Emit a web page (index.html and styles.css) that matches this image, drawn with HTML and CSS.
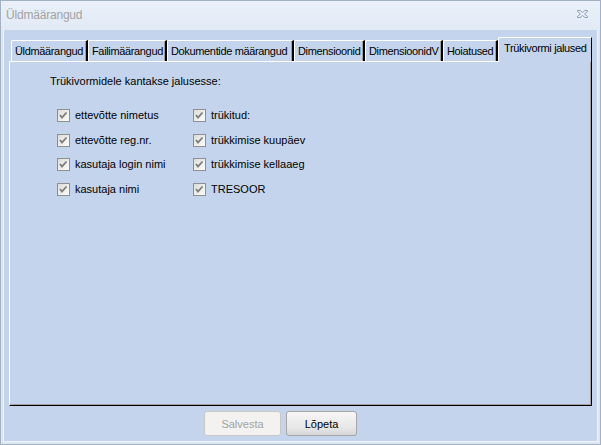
FILE: index.html
```html
<!DOCTYPE html>
<html lang="et">
<head>
<meta charset="utf-8">
<title>Üldmäärangud</title>
<link rel="stylesheet" href="styles.css">
</head>
<body>
<div class="window">
  <div class="titlebar">
    <span class="title">Üldmäärangud</span>
    <svg class="close" width="11" height="8" viewBox="0 0 11 8">
      <path d="M0.5 0.5 H3 L5.5 2.5 L8 0.5 H10.5 V1.5 L7.5 4 L10.5 6.5 V7.5 H8 L5.5 5.5 L3 7.5 H0.5 V6.5 L3.5 4 L0.5 1.5 Z" fill="#eef3fa" stroke="#8a9dbd" stroke-width="1"/>
    </svg>
  </div>
  <div class="client">
    <div class="tabstrip">
      <div class="tab t1">Üldmäärangud</div>
      <div class="tab t2">Failimäärangud</div>
      <div class="tab t3">Dokumentide määrangud</div>
      <div class="tab t4">Dimensioonid</div>
      <div class="tab t5">DimensioonidV</div>
      <div class="tab t6">Hoiatused</div>
      <div class="tab active t7">Trükivormi jalused</div>
    </div>
    <div class="panel">
      <div class="heading">Trükivormidele kantakse jalusesse:</div>
      <div class="grid">
        <div class="col">
          <label class="cb"><span class="box"><svg width="13" height="13" viewBox="0 0 13 13"><polyline points="3,6 5,8.5 9.5,3.5" fill="none" stroke="#7d7d7d" stroke-width="1.8"/></svg></span>ettevõtte nimetus</label>
          <label class="cb"><span class="box"><svg width="13" height="13" viewBox="0 0 13 13"><polyline points="3,6 5,8.5 9.5,3.5" fill="none" stroke="#7d7d7d" stroke-width="1.8"/></svg></span>ettevõtte reg.nr.</label>
          <label class="cb"><span class="box"><svg width="13" height="13" viewBox="0 0 13 13"><polyline points="3,6 5,8.5 9.5,3.5" fill="none" stroke="#7d7d7d" stroke-width="1.8"/></svg></span>kasutaja login nimi</label>
          <label class="cb"><span class="box"><svg width="13" height="13" viewBox="0 0 13 13"><polyline points="3,6 5,8.5 9.5,3.5" fill="none" stroke="#7d7d7d" stroke-width="1.8"/></svg></span>kasutaja nimi</label>
        </div>
        <div class="col">
          <label class="cb"><span class="box"><svg width="13" height="13" viewBox="0 0 13 13"><polyline points="3,6 5,8.5 9.5,3.5" fill="none" stroke="#7d7d7d" stroke-width="1.8"/></svg></span>trükitud:</label>
          <label class="cb"><span class="box"><svg width="13" height="13" viewBox="0 0 13 13"><polyline points="3,6 5,8.5 9.5,3.5" fill="none" stroke="#7d7d7d" stroke-width="1.8"/></svg></span>trükkimise kuupäev</label>
          <label class="cb"><span class="box"><svg width="13" height="13" viewBox="0 0 13 13"><polyline points="3,6 5,8.5 9.5,3.5" fill="none" stroke="#7d7d7d" stroke-width="1.8"/></svg></span>trükkimise kellaaeg</label>
          <label class="cb"><span class="box"><svg width="13" height="13" viewBox="0 0 13 13"><polyline points="3,6 5,8.5 9.5,3.5" fill="none" stroke="#7d7d7d" stroke-width="1.8"/></svg></span>TRESOOR</label>
        </div>
      </div>
    </div>
    <div class="buttons">
      <button class="btn disabled" disabled>Salvesta</button>
      <button class="btn">Lõpeta</button>
    </div>
  </div>
</div>
</body>
</html>
```
FILE: styles.css
```css
html, body {
  margin: 0;
  padding: 0;
}
body {
  width: 601px;
  height: 445px;
  overflow: hidden;
  font-family: "Liberation Sans", Arial, sans-serif;
  font-size: 11px;
  color: #000;
}
.window {
  box-sizing: border-box;
  width: 601px;
  height: 445px;
  border: 1px solid #a3b1c4;
  background: #dde7f4;
  display: flex;
  flex-direction: column;
}
.titlebar {
  height: 29px;
  flex: none;
  box-sizing: border-box;
  background: linear-gradient(#e9f0f9, #e2eaf6);
  display: flex;
  align-items: center;
  justify-content: space-between;
  padding: 0 12px 2px 5px;
}
.title {
  color: #a3a3a3;
  font-size: 12px;
  letter-spacing: -0.2px;
}
.close {
  display: block;
  margin-top: -2px;
}
.client {
  flex: 1;
  margin: 0 2px 2px;
  border-left: 1px solid #eef3fa;
  border-bottom: 1px solid #eef3fa;
  border-right: 1px solid #eef3fa;
  background: #c4d4ec;
  padding: 7px 5px 0 5px;
  display: flex;
  flex-direction: column;
}
.tabstrip {
  display: flex;
  align-items: flex-end;
  height: 24px;
  padding-left: 2px;
  position: relative;
  z-index: 1;
}
.tab {
  box-sizing: border-box;
  height: 21px;
  line-height: 20px;
  padding-left: 3px;
  white-space: nowrap;
  overflow: hidden;
  letter-spacing: -0.35px;
  background: #c4d4ec;
  border-top: 1px solid #ffffff;
  border-left: 1px solid #ffffff;
  border-right: 2px solid #000;
  box-shadow: inset -1px 0 0 #a0a0a0;
  border-top-left-radius: 2px;
}
.t1 { width: 77px; }
.t2 { width: 79px; }
.t3 { width: 127px; }
.t4 { width: 71px; }
.t5 { width: 78px; }
.t6 { width: 55px; }
.t7 { width: 94px; }
.tab.active {
  height: 25px;
  margin-bottom: -1px;
  line-height: 21px;
  padding-left: 5px;
  border-right: 1px solid #000;
  box-shadow: none;
}
.panel {
  box-sizing: border-box;
  height: 345px;
  border-top: 1px solid #ffffff;
  border-left: 1px solid #ffffff;
  border-right: 1px solid #000;
  border-bottom: 1px solid #000;
  box-shadow: inset -1px -1px 0 #a0a0a0;
  padding: 12px 0 0 40px;
}
.heading {
  line-height: 14px;
}
.grid {
  display: flex;
  padding: 21px 0 0 7px;
}
.col {
  display: flex;
  flex-direction: column;
  gap: 11.5px;
}
.col + .col {
  margin-left: 20px;
  width: 120px;
}
.col:first-child {
  width: 116px;
}
.cb {
  display: flex;
  align-items: center;
  height: 13px;
  gap: 5px;
  line-height: 13px;
  white-space: nowrap;
}
.box {
  box-sizing: border-box;
  width: 13px;
  height: 13px;
  border: 1px solid #8e8f8f;
  background: linear-gradient(135deg, #dcdcd8, #f6f6f4 80%);
  display: block;
  flex: none;
}
.box svg {
  display: block;
  margin: -1px;
}
.buttons {
  display: flex;
  gap: 5px;
  padding: 5px 0 0 195px;
}
.btn {
  box-sizing: border-box;
  height: 25px;
  font-family: "Liberation Sans", Arial, sans-serif;
  font-size: 11px;
  border-radius: 3px;
  padding: 0;
  color: #000;
  border: 1px solid #a6a6a6;
  background: linear-gradient(#f7f7f7, #e6e6e6 70%, #d7d7d7);
  width: 71px;
}
.btn.disabled {
  width: 77px;
  color: #a2a2a2;
  border-color: #c9c9c4;
  background: #f3f2f1;
}
```
